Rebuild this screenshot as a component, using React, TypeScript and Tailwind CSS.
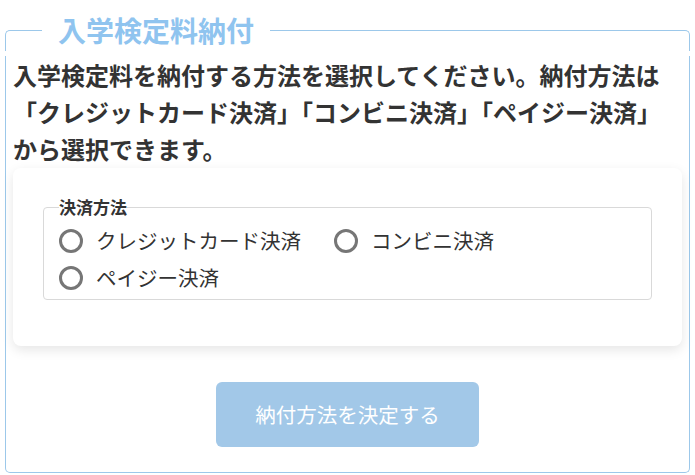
import React from "react";

const font = { fontFamily: '"Noto Sans CJK JP", "Noto Sans", sans-serif' };

function Radio({ label }: { label: string }) {
  return (
    <label className="flex items-center gap-[13px] h-[37px] cursor-pointer">
      <span className="w-[24px] h-[24px] rounded-full border-[3px] border-[#767676] bg-white" />
      <span className="text-[20.5px] text-[#333]">{label}</span>
    </label>
  );
}

export default function App() {
  return (
    <div className="w-[695px] h-[475px] bg-white overflow-hidden pt-[9px] px-[5px]" style={font}>
      {/* top edge with title cut into the border */}
      <div className="flex h-[42px]">
        <div className="w-[37px] mt-[21px] border-t border-l border-[#9cc8ea] rounded-tl-[5px]" />
        <h2 className="px-4 text-[28px] font-bold leading-[42px] text-[#8fc4ef]">入学検定料納付</h2>
        <div className="flex-1 mt-[21px] border-t border-r border-[#9cc8ea] rounded-tr-[5px]" />
      </div>

      <div className="h-[417px] border-x border-b border-[#9cc8ea] rounded-b-[5px] px-[7px]">
        <p className="mt-[5px] text-[24px] font-bold leading-[37px] text-[#333]">
          入学検定料を納付する方法を選択してください。納付方法は
          <br />
          「クレジットカード決済」「コンビニ決済」「ペイジー決済」
          <br />
          から選択できます。
        </p>

        <div className="mt-[1px] rounded-lg bg-white shadow-[0_4px_12px_rgba(0,0,0,0.1)] px-[30px] pt-[27px] pb-[46px]">
          <fieldset className="border border-[#d9d9d9] rounded-[4px] pl-[15px] pr-4 pb-[3px]">
            <legend className="text-[17px] font-bold leading-[24px] text-[#333]">
              決済方法
            </legend>
            <div className="flex flex-wrap gap-x-[33px] mt-[3px]">
              <Radio label="クレジットカード決済" />
              <Radio label="コンビニ決済" />
              <Radio label="ペイジー決済" />
            </div>
          </fieldset>
        </div>

        <div className="flex justify-center mt-[36px]">
          <button className="w-[263px] h-[65px] rounded-md bg-[#a2c8e8] text-white text-[20.5px]">
            納付方法を決定する
          </button>
        </div>
      </div>
    </div>
  );
}
